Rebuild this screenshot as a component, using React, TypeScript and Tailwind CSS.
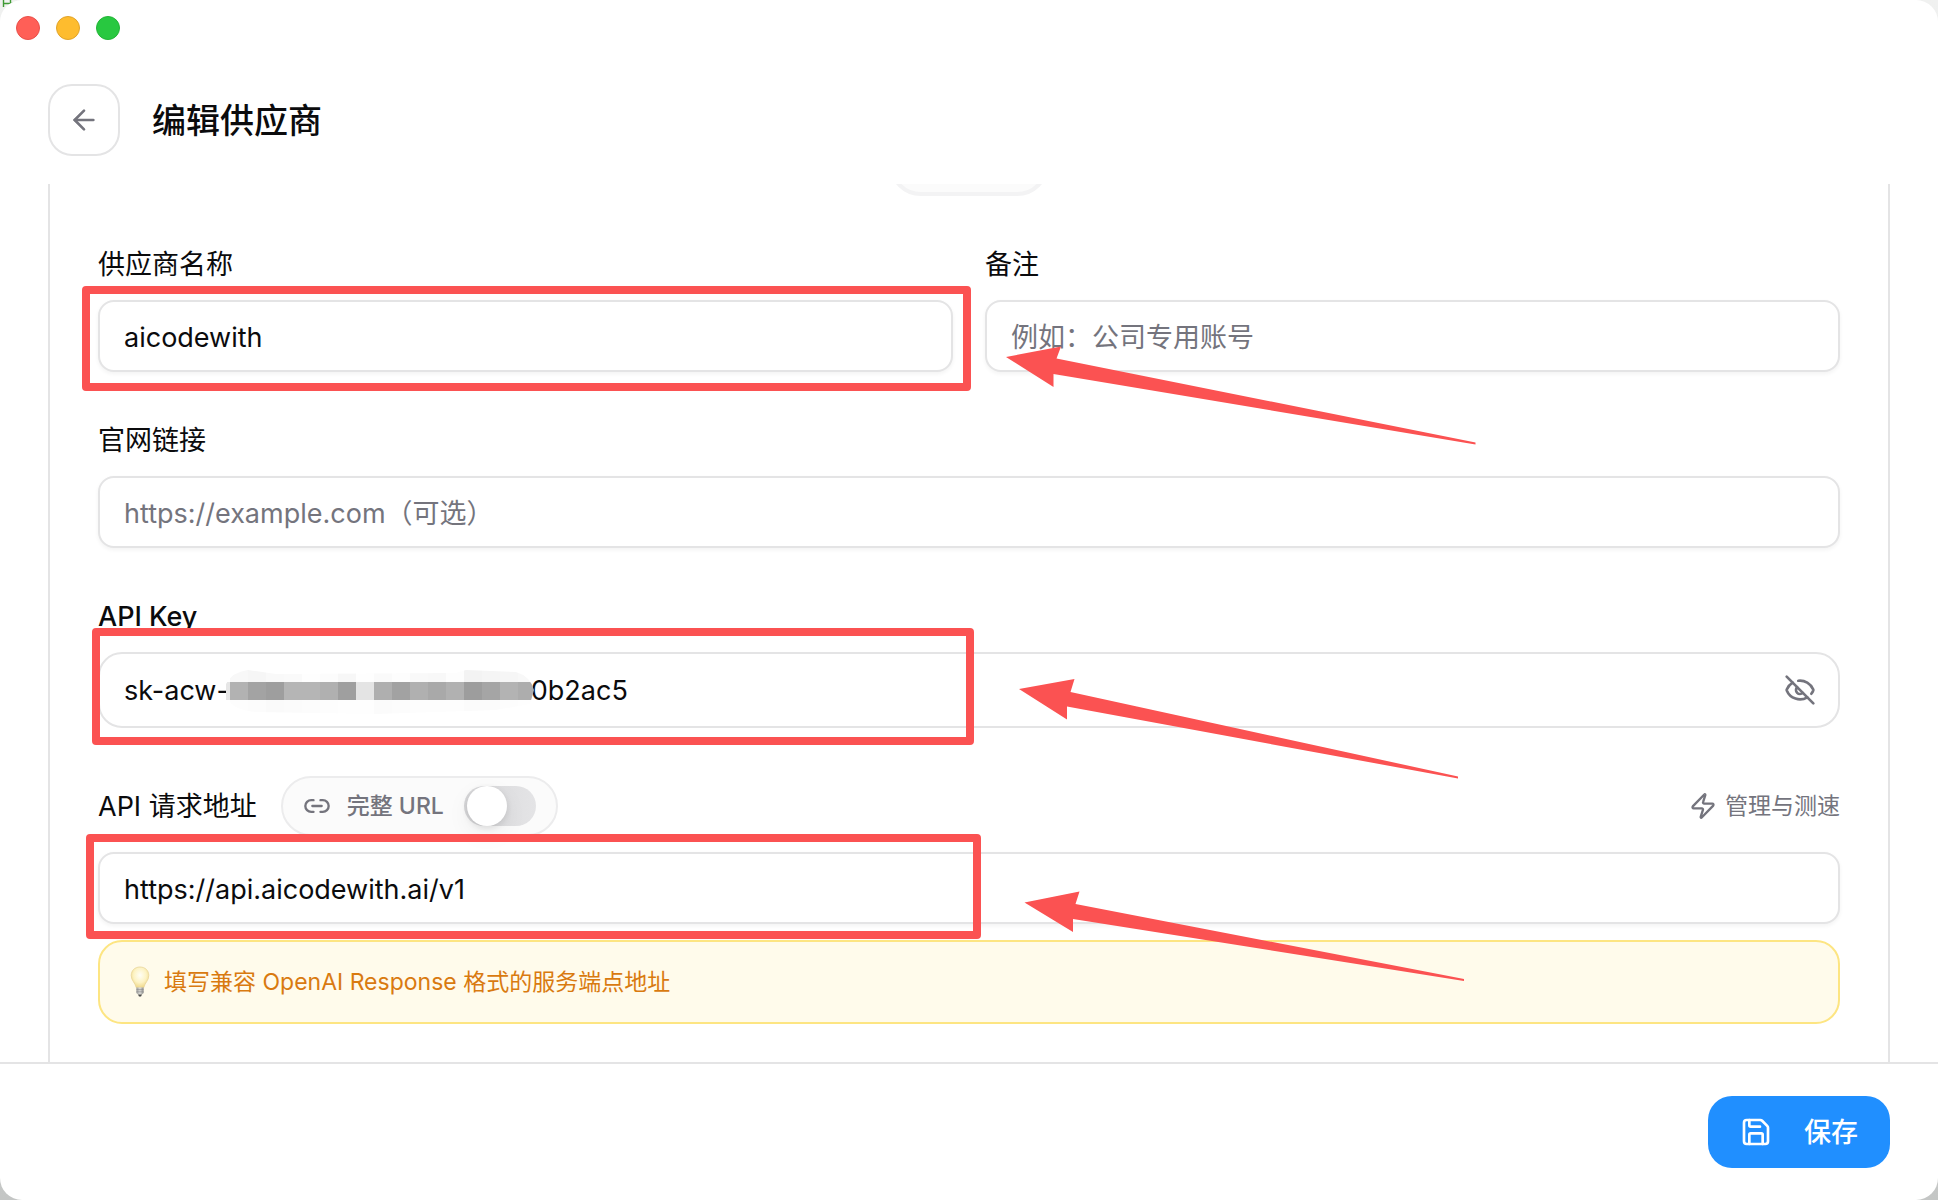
import { useState, type InputHTMLAttributes, type ReactNode } from "react";
import { ArrowLeft, EyeOff, Link2, Save, Zap } from "lucide-react";

// redacted part of the key, one shade per 18px block
const MOSAIC = [
  { color: "#b2b2b2", top: "#f8f8f8", bottom: "#fdfdfd" },
  { color: "#a3a3a3", top: "#f6f6f6", bottom: "#fcfcfc" },
  { color: "#9e9e9e", top: "#f9f9f9", bottom: "#fafafa" },
  { color: "#b5b5b5", top: "#fafafa", bottom: "#fbfbfb" },
  { color: "#b5b5b5", top: "#fefefe", bottom: "#fcfcfc" },
  { color: "#b0b0b0", top: "#fcfcfc", bottom: "#fdfdfd" },
  { color: "#9f9f9f", top: "#f7f7f7", bottom: "#fefefe" },
  { color: "#e4e4e4", top: "#fefefe", bottom: "#fefefe" },
  { color: "#afafaf", top: "#fafafa", bottom: "#fbfbfb" },
  { color: "#a2a2a2", top: "#fdfdfd", bottom: "#fcfcfc" },
  { color: "#b0b0b0", top: "#f9f9f9", bottom: "#fdfdfd" },
  { color: "#a9a9a9", top: "#f8f8f8", bottom: "#fdfdfd" },
  { color: "#b1b1b1", top: "#fdfdfd", bottom: "#fdfdfd" },
  { color: "#9d9d9d", top: "#f3f3f3", bottom: "#fbfbfb" },
  { color: "#a5a5a5", top: "#f5f5f5", bottom: "#fbfbfb" },
  { color: "#b3b3b3", top: "#f6f6f6", bottom: "#fdfdfd" },
  { color: "#adadad", top: "#f8f8f8", bottom: "#fefefe" },
];

const HIDDEN_PART = "\u2003".repeat(11) + "\u2009";

function Mosaic() {
  return (
    <svg
      width="308"
      height="48"
      viewBox="0 0 308 48"
      className="pointer-events-none absolute top-[14px] left-[128px]"
      aria-hidden="true"
    >
      <clipPath id="brush">
        <path d="M0 18 Q6 6 22 4 L50 8 L230 7 L240 4 L290 6 Q304 10 308 24 L304 38 L270 44 L150 48 L30 46 Q10 44 4 36 L0 36 Z" />
      </clipPath>
      <g clipPath="url(#brush)" shapeRendering="crispEdges">
        <rect x="0" y="16" width="4" height="18" fill="#e6e6e6" />
        {MOSAIC.map((block, i) => (
          <g key={i}>
            <rect x={4 + i * 18} y="0" width="18" height="16" fill={block.top} />
            <rect x={4 + i * 18} y="16" width="18" height="18" fill={block.color} />
            <rect x={4 + i * 18} y="34" width="18" height="14" fill={block.bottom} />
          </g>
        ))}
      </g>
    </svg>
  );
}

function Arrow({ d, className }: { d: string; className: string }) {
  return (
    <svg
      width="472"
      height="102"
      viewBox="0 0 472 102"
      className={`pointer-events-none absolute z-20 ${className}`}
      aria-hidden="true"
    >
      <path d={d} fill="#fb5252" />
    </svg>
  );
}

function Highlight({ className }: { className: string }) {
  return (
    <div className={`pointer-events-none absolute z-10 rounded-[4px] border-8 border-[#fb5252] ${className}`} />
  );
}

interface FieldProps extends InputHTMLAttributes<HTMLInputElement> {
  id: string;
  label: string;
  children?: ReactNode;
}

const labelClass = "pt-[2px] text-[27px] leading-[38px]";

const inputClass =
  "block h-[72px] w-full rounded-2xl border-2 border-[#e4e4e5] bg-white px-6 pt-[2px] text-[27px] text-[#0b0b0d] shadow-[0_2px_4px_rgba(0,0,0,0.05)] outline-none placeholder:text-[#74747d] placeholder:opacity-100";

function Field({ id, label, children, ...rest }: FieldProps) {
  return (
    <div className="flex flex-col gap-4">
      <label htmlFor={id} className={labelClass}>
        {label}
      </label>
      <div className="relative">
        <input id={id} className={inputClass} {...rest} />
        {children}
      </div>
    </div>
  );
}

export default function App() {
  const [name, setName] = useState("aicodewith");
  const [apiKey, setApiKey] = useState(`sk-acw-${HIDDEN_PART}0b2ac5`);
  const [baseUrl, setBaseUrl] = useState("https://api.aicodewith.ai/v1");
  const [fullUrl, setFullUrl] = useState(false);

  return (
    <div className="relative h-screen bg-linear-to-b from-[#f0f1f0] to-[#c4c6c5] font-['Inter','Noto_Sans_CJK_SC',sans-serif] text-[#0b0b0d]">
      {/* desktop showing behind the window corner */}
      <svg width="16" height="10" viewBox="0 0 16 10" className="absolute top-0 left-0" aria-hidden="true">
        <path d="M3.5 0 V7 M3 3.5 H14 M10.5 0 V4" stroke="#3f9a34" strokeWidth="1.4" fill="none" />
      </svg>

      <div className="relative flex h-full flex-col overflow-hidden rounded-[22px] bg-white">
        <div className="flex shrink-0 gap-4 p-4">
          <span className="size-6 rounded-full border border-[#e8504a] bg-[#ff5f57]" />
          <span className="size-6 rounded-full border border-[#e0a32a] bg-[#febc2e]" />
          <span className="size-6 rounded-full border border-[#22b436] bg-[#28c840]" />
        </div>

        <header className="flex shrink-0 items-center gap-8 px-12 pt-7 pb-7">
          <button
            type="button"
            aria-label="返回"
            className="flex size-[72px] items-center justify-center rounded-3xl border-2 border-[#e4e4e5] text-[#74747d]"
          >
            <ArrowLeft size={32} />
          </button>
          <h1 className="pt-[2px] text-[34px] leading-10 font-medium">编辑供应商</h1>
        </header>

        <main className="min-h-0 flex-1 overflow-hidden px-12">
          <form className="-mt-[198px] flex flex-col gap-12 rounded-3xl border-2 border-[#e4e4e5] px-12 pt-12 pb-16">
            <div className="size-40 self-center rounded-[32px] border-4 border-[#f3f3f4] bg-[#fbfbfb]" />

            <div className="grid grid-cols-2 gap-8">
              <Field id="name" label="供应商名称" value={name} onChange={(e) => setName(e.target.value)}>
                <Highlight className="-top-[14px] -right-[18px] -bottom-[19px] -left-[16px]" />
              </Field>
              <Field id="remark" label="备注" placeholder="例如：公司专用账号">
                <Arrow
                  className="top-[46px] left-[20px]"
                  d="M1 11 L56 0.5 L51.5 12.5 L470.5 96.5 V98.5 L48.5 28 V41 Z"
                />
              </Field>
            </div>

            <Field id="website" label="官网链接" placeholder="https://example.com（可选）" />

            <div className="flex flex-col gap-4">
              <label htmlFor="apiKey" className={`${labelClass} font-medium`}>
                API Key
              </label>
              <div className="relative">
                <input
                  id="apiKey"
                  className="block h-[76px] w-full rounded-3xl border-2 border-[#e4e4e5] bg-white px-6 pr-20 text-[27px] outline-none"
                  value={apiKey}
                  onChange={(e) => setApiKey(e.target.value)}
                />
                <Mosaic />
                <button
                  type="button"
                  aria-label="隐藏"
                  className="absolute inset-y-0 right-6 flex items-center text-[#74747d]"
                >
                  <EyeOff size={32} />
                </button>
                <Highlight className="-top-[24px] -bottom-[17px] -left-[6px] w-[calc(50%+11px)]" />
                <Arrow
                  className="top-[26px] left-[calc(50%+49px)]"
                  d="M1 11 L56.5 1 L52.5 14 L440 98.5 V100.5 L49 28.5 V41.5 Z"
                />
              </div>
            </div>

            <div className="flex flex-col gap-4">
              <div className="flex items-center justify-between">
                <div className="flex items-center gap-6">
                  <label htmlFor="baseUrl" className={labelClass}>
                    API 请求地址
                  </label>
                  <label className="flex h-[60px] items-center gap-4 rounded-full border-2 border-[#ececed] bg-[#fbfbfb] px-5 text-[23px] font-medium text-[#74747d]">
                    <Link2 size={28} />
                    完整 URL
                    <input
                      type="checkbox"
                      role="switch"
                      checked={fullUrl}
                      onChange={(e) => setFullUrl(e.target.checked)}
                      className="ml-1 flex h-10 w-[72px] appearance-none items-center rounded-full bg-linear-to-r from-[#d8d8da] to-[#e4e4e6] px-[3px] before:size-10 before:rounded-full before:bg-white before:shadow-[0_8px_24px_rgba(0,0,0,0.06),0_2px_6px_rgba(0,0,0,0.10)] before:content-[''] checked:justify-end checked:bg-[#1f8fff]"
                    />
                  </label>
                </div>
                <button type="button" className="flex items-center gap-2 text-[23px] text-[#74747d]">
                  <Zap size={28} />
                  管理与测速
                </button>
              </div>

              <div className="relative">
                <input
                  id="baseUrl"
                  className={inputClass}
                  value={baseUrl}
                  onChange={(e) => setBaseUrl(e.target.value)}
                />
                <Highlight className="-top-[18px] -bottom-[15px] -left-[12px] w-[calc(50%+24px)]" />
                <Arrow
                  className="top-[39px] left-[calc(50%+55px)]"
                  d="M0.5 11.5 L55.5 0.5 L51.5 13 L440 88 V90 L49 28 V41 Z"
                />
              </div>

              <div className="flex items-center gap-3 rounded-3xl border-2 border-[#fde582] bg-[#fffbeb] px-7 py-6 text-[23px] leading-8 text-[#d97a10]">
                <Bulb />
                <p>填写兼容 OpenAI Response 格式的服务端点地址</p>
              </div>
            </div>
          </form>
        </main>

        <footer className="flex shrink-0 justify-end border-t-2 border-[#e4e4e5] px-12 py-8">
          <button
            type="button"
            className="flex h-[72px] items-center gap-8 rounded-3xl bg-[#208fff] px-8 text-[27px] font-medium text-white"
          >
            <Save size={32} />
            <span className="pt-[2px]">保存</span>
          </button>
        </footer>
      </div>
    </div>
  );
}

function Bulb() {
  return (
    <svg width="24" height="32" viewBox="0 0 24 32" aria-hidden="true">
      <defs>
        <radialGradient id="glass" cx="0.5" cy="0.4" r="0.6">
          <stop offset="0" stopColor="#fffef6" />
          <stop offset="0.6" stopColor="#fdf3c4" />
          <stop offset="1" stopColor="#efd88a" />
        </radialGradient>
        <linearGradient id="base" x1="0" x2="1">
          <stop offset="0" stopColor="#9a9a98" />
          <stop offset="0.5" stopColor="#deded9" />
          <stop offset="1" stopColor="#8a8a88" />
        </linearGradient>
      </defs>
      <path
        d="M12 1 C6.5 1 3.2 4.8 3.2 9.4 C3.2 14.6 7.2 16.6 8.2 21.6 H15.8 C16.8 16.6 20.8 14.6 20.8 9.4 C20.8 4.8 17.5 1 12 1 Z"
        fill="url(#glass)"
        stroke="#e9d59a"
        strokeWidth="0.8"
      />
      <path d="M8.4 21.6 H15.6 V27 L14 28.5 H10 L8.4 27 Z" fill="url(#base)" />
      <path d="M8.4 23.6 H15.6 M8.4 25.8 H15.6" stroke="#85858a" strokeWidth="0.6" />
      <path d="M10 28.5 H14 L13 30.5 H11 Z" fill="#4b4b4b" />
    </svg>
  );
}
